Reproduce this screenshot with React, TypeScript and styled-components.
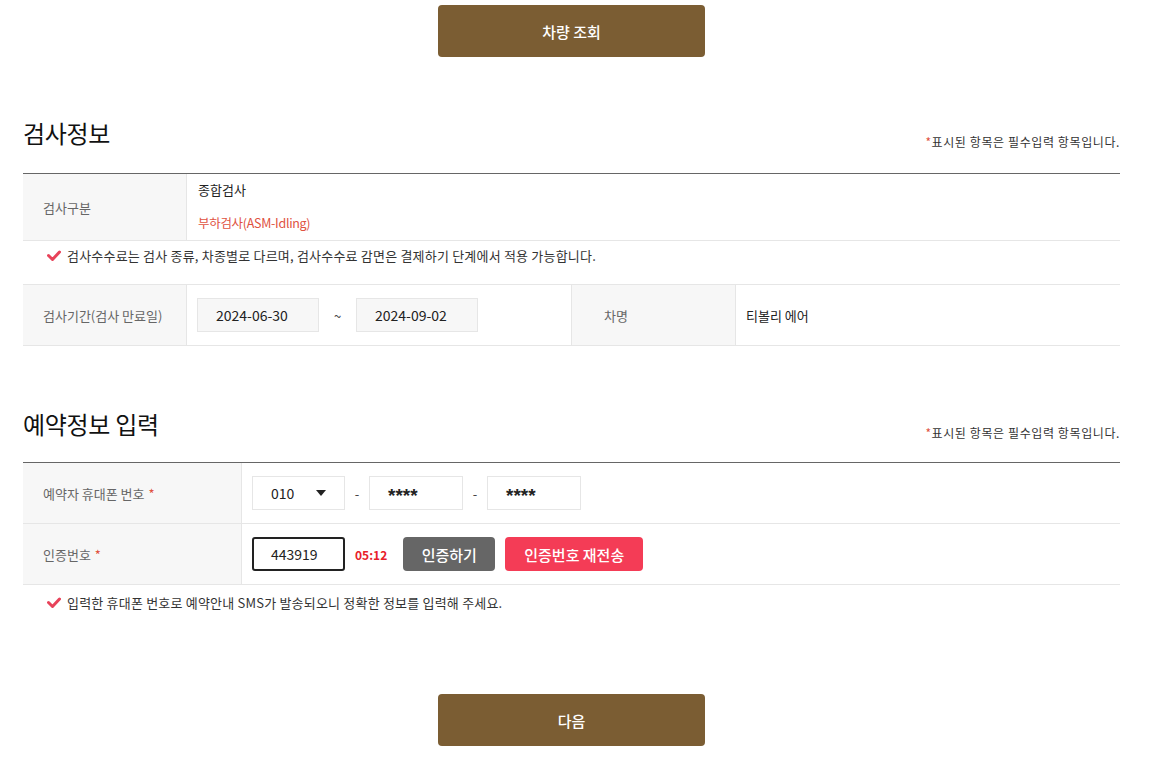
import React from "react";
import styled, { createGlobalStyle } from "styled-components";

const Global = createGlobalStyle`
  html, body { margin: 0; padding: 0; background: #fff; }
  body { font-family: "Noto Sans CJK KR", "Noto Sans", sans-serif; color: #222; }
  * { box-sizing: border-box; }
`;

const Page = styled.div`
  padding: 5px 31px 0 23px;
  display: flex;
  flex-direction: column;
`;

const BrownButton = styled.button<{ $top?: number }>`
  align-self: center;
  width: 267px;
  height: 52px;
  margin-top: ${(p) => p.$top ?? 0}px;
  border: none;
  border-radius: 4px;
  background: #7b5d33;
  color: #fff;
  font-family: inherit;
  font-size: 15px;
  font-weight: 500;
  cursor: pointer;
`;

const SectionHead = styled.div<{ $top: number; $gap: number }>`
  display: flex;
  justify-content: space-between;
  align-items: flex-end;
  margin-top: ${(p) => p.$top}px;
  padding-bottom: ${(p) => p.$gap}px;
`;

const Title = styled.h2`
  margin: 0;
  font-size: 24px;
  font-weight: 400;
  line-height: 36px;
  color: #111;
  letter-spacing: -0.3px;
`;

const Required = styled.span`
  font-size: 12px;
  color: #333;
  line-height: 14px;
  letter-spacing: 0.6px;
  margin-bottom: 2px;
  &::before { content: "*"; color: #e0523f; }
`;

const Table = styled.div`
  border-top: 1px solid #666;
`;

const Row = styled.div<{ $cols: string; $h: number }>`
  display: grid;
  grid-template-columns: ${(p) => p.$cols};
  min-height: ${(p) => p.$h}px;
  border-bottom: 1px solid #e6e6e6;
`;

const Label = styled.div<{ $pad?: number; $border?: boolean }>`
  background: #f7f7f7;
  display: flex;
  align-items: center;
  padding-left: ${(p) => p.$pad ?? 20}px;
  font-size: 13px;
  color: #666;
  border-left: ${(p) => (p.$border ? "1px solid #e6e6e6" : "none")};
  border-right: 1px solid #e6e6e6;
`;

const Star = styled.span`
  color: #e0523f;
  margin-left: 4px;
`;

const Cell = styled.div<{ $pad?: number }>`
  display: flex;
  align-items: center;
  padding-left: ${(p) => p.$pad ?? 10}px;
  font-size: 13px;
  color: #222;
`;

const Stack = styled.div`
  display: flex;
  flex-direction: column;
  justify-content: flex-start;
  padding: 6px 0 0 11px;
  gap: 14px;
  font-size: 13px;
`;

const RedText = styled.span`
  color: #e0523f;
  font-size: 12.5px;
  letter-spacing: -0.3px;
`;

const Notice = styled.div<{ $h: number; $pt: number; $border?: boolean }>`
  display: flex;
  height: ${(p) => p.$h}px;
  padding: ${(p) => p.$pt}px 0 0 24px;
  font-size: 13px;
  line-height: 20px;
  color: #333;
  letter-spacing: 0.2px;
  border-bottom: ${(p) => (p.$border ? "1px solid #e6e6e6" : "none")};
`;

const NoticeLine = styled.div`
  display: flex;
  align-items: center;
  gap: 6px;
  align-self: flex-start;
`;

const DateBox = styled.div`
  width: 122px;
  height: 34px;
  background: #f7f7f7;
  border: 1px solid #e6e6e6;
  display: flex;
  align-items: center;
  padding-left: 18px;
  font-size: 14px;
  color: #222;
`;

const Tilde = styled.span`
  width: 37px;
  text-align: center;
  font-size: 13px;
  color: #444;
`;

const InputBox = styled.div<{ $w: number; $strong?: boolean }>`
  width: ${(p) => p.$w}px;
  height: 34px;
  border: ${(p) => (p.$strong ? "2px solid #222" : "1px solid #e6e6e6")};
  border-radius: ${(p) => (p.$strong ? 3 : 0)}px;
  display: flex;
  align-items: center;
  justify-content: space-between;
  padding: 0 ${(p) => (p.$strong ? 16 : 18)}px 0 ${(p) => (p.$strong ? 17 : 18)}px;
  font-size: 14px;
  color: #222;
`;

const Stars = styled.span`
  font-family: "Liberation Sans", sans-serif;
  font-size: 19px;
  font-weight: 700;
  letter-spacing: 0px;
  line-height: 1;
  padding-top: 5px;
`;

const Dash = styled.span`
  width: 24px;
  text-align: center;
  font-size: 13px;
  color: #444;
`;

const Timer = styled.span`
  color: #e8202a;
  font-weight: 700;
  font-size: 12px;
  margin: 0 16px 0 10px;
`;

const ActionButton = styled.button<{ $bg: string; $w: number; $gap?: number }>`
  width: ${(p) => p.$w}px;
  height: 34px;
  margin-right: ${(p) => p.$gap ?? 0}px;
  border: none;
  border-radius: 4px;
  background: ${(p) => p.$bg};
  color: #fff;
  font-family: inherit;
  font-size: 15px;
  font-weight: 500;
  cursor: pointer;
`;

const Check = () => (
  <svg width="14" height="12" viewBox="0 0 14 12">
    <path d="M1.5 5.5 L5.5 9.5 L12.5 2" stroke="#e8435a" strokeWidth="3" fill="none" strokeLinecap="round" strokeLinejoin="round" />
  </svg>
);

const Caret = () => (
  <svg width="10" height="6" viewBox="0 0 10 6">
    <path d="M0 0 H10 L5 6 Z" fill="#222" />
  </svg>
);

export default function App() {
  return (
    <>
      <Global />
      <Page>
        <BrownButton>차량 조회</BrownButton>

        <SectionHead $top={58} $gap={22}>
          <Title>검사정보</Title>
          <Required>표시된 항목은 필수입력 항목입니다.</Required>
        </SectionHead>
        <Table>
          <Row $cols="164px 1fr" $h={67}>
            <Label>검사구분</Label>
            <Stack>
              <span>종합검사</span>
              <RedText>부하검사(ASM-Idling)</RedText>
            </Stack>
          </Row>
          <Notice $h={44} $pt={5} $border>
            <NoticeLine>
              <Check />
              검사수수료는 검사 종류, 차종별로 다르며, 검사수수료 감면은 결제하기 단계에서 적용 가능합니다.
            </NoticeLine>
          </Notice>
          <Row $cols="164px 384px 165px 1fr" $h={61}>
            <Label>검사기간(검사 만료일)</Label>
            <Cell>
              <DateBox>2024-06-30</DateBox>
              <Tilde>~</Tilde>
              <DateBox>2024-09-02</DateBox>
            </Cell>
            <Label $pad={32} $border>차명</Label>
            <Cell>티볼리 에어</Cell>
          </Row>
        </Table>

        <SectionHead $top={60} $gap={20}>
          <Title>예약정보 입력</Title>
          <Required>표시된 항목은 필수입력 항목입니다.</Required>
        </SectionHead>
        <Table>
          <Row $cols="219px 1fr" $h={61}>
            <Label>
              예약자 휴대폰 번호<Star>*</Star>
            </Label>
            <Cell>
              <InputBox $w={93}>
                010
                <Caret />
              </InputBox>
              <Dash>-</Dash>
              <InputBox $w={94}>
                <Stars>****</Stars>
              </InputBox>
              <Dash>-</Dash>
              <InputBox $w={94}>
                <Stars>****</Stars>
              </InputBox>
            </Cell>
          </Row>
          <Row $cols="219px 1fr" $h={61}>
            <Label>
              인증번호<Star>*</Star>
            </Label>
            <Cell>
              <InputBox $w={93} $strong>443919</InputBox>
              <Timer>05:12</Timer>
              <ActionButton $bg="#666" $w={92} $gap={10}>인증하기</ActionButton>
              <ActionButton $bg="#f43c56" $w={138}>인증번호 재전송</ActionButton>
            </Cell>
          </Row>
        </Table>
        <Notice $h={36} $pt={8}>
          <NoticeLine>
            <Check />
            입력한 휴대폰 번호로 예약안내 SMS가 발송되오니 정확한 정보를 입력해 주세요.
          </NoticeLine>
        </Notice>

        <BrownButton $top={73}>다음</BrownButton>
      </Page>
    </>
  );
}
